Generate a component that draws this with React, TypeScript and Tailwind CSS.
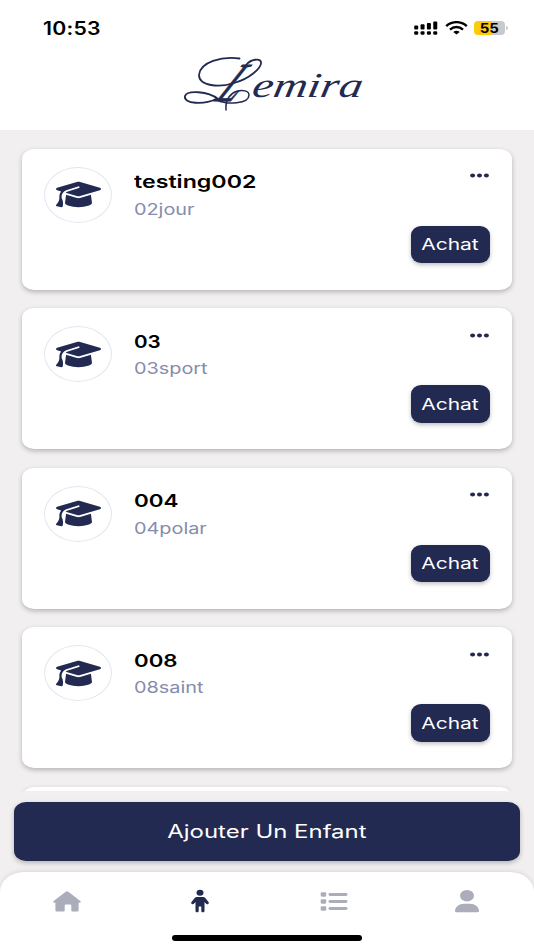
import React from 'react';
import clsx from 'clsx';
import { FaGraduationCap } from 'react-icons/fa6';

const children = [
  { name: 'testing002', detail: '02jour', nameScale: 'scale-x-[1.325]' },
  { name: '03', detail: '03sport', nameScale: 'scale-x-[1.18]' },
  { name: '004', detail: '04polar', nameScale: 'scale-x-[1.28]' },
  { name: '008', detail: '08saint', nameScale: 'scale-x-[1.27]' },
];

const StatusBar = () => (
  <div className="flex h-14 items-center justify-between pl-[43px] pr-[25px] text-black">
    <span className="mt-[2px] inline-block origin-left scale-x-[1.18] text-[18px] font-semibold leading-none tracking-[0.2px]">10:53</span>
    <div className="flex items-center">
      <svg className="h-[14px] w-6" viewBox="0 0 24 14">
        {[0, 1, 2, 3].map((i) => (
          <g key={i}>
            <rect x={0.2 + i * 6.35} y={4.5 - i * 1.3} width="4" height={4 + i * 1.3} rx="1" />
            <rect x={0.2 + i * 6.35} y="10.2" width="4" height="3.6" rx="1.2" />
          </g>
        ))}
      </svg>
      <svg className="ml-[7px] h-[14px] w-[23px]" viewBox="0 0 23 14" fill="none" stroke="currentColor" strokeWidth="2.4">
        <path d="M1.2 5.2C7-.2 16-.2 21.8 5.2" />
        <path d="M5 8.600c3.800-3.400 9.200-3.400 13 0" />
        <path d="M8.300 10.900c1.800-1.500 4.600-1.500 6.400 0l-3.200 2.700z" fill="currentColor" stroke="none" />
      </svg>
      <div className="ml-[6px] flex h-[14px] w-[31px] items-center justify-center rounded-[4px] bg-[linear-gradient(to_right,#fecb0a_55%,#c9c9cb_55%)]">
        <span className="scale-x-[1.15] text-[13px] font-bold leading-none">55</span>
      </div>
      <div className="ml-px mr-px h-1 w-[2px] rounded-r-full bg-[#c9c9cb]" />
    </div>
  </div>
);

const Logo = () => (
  <svg className="mx-auto h-[64px] w-[200px]" viewBox="167 50 200 64" fill="none" stroke="#222a52" strokeLinecap="round">
    {/* Swashes round the initial */}
    <path d="M239.500 58.500C222 56 200 62 199 75c0 11 20 13 35 8 15-4 28-15 27-21-1-4-10-3-15 3" strokeWidth="1.800" />
    <path d="M218 99c-10-8-31-9-33-3-2 8 19 9 31 3" strokeWidth="1.800" />
    <path d="M217 100c10 5 32 4 32-5 0-8-25-7-23 15" strokeWidth="1.500" />
    <g fill="#222a52" stroke="none" fontFamily="'Liberation Serif', serif" fontStyle="italic">
      <text transform="translate(214 100.500) skewX(-34)" x="0" y="0" fontSize="55" textLength="20" lengthAdjust="spacingAndGlyphs" stroke="#222a52" strokeWidth="0.900">L</text>
      <text transform="translate(251 97) skewX(-10)" x="0" y="0" fontSize="35" textLength="110" lengthAdjust="spacingAndGlyphs">emira</text>
    </g>
  </svg>
);

type ChildCardProps = { name: string; detail: string; nameScale: string };

const ChildCard = ({ name, detail, nameScale }: ChildCardProps) => (
  <div className="flex h-[141px] shrink-0 rounded-[12px/10px] bg-white pl-[22px] pr-[22px] pt-[18px] shadow-[0_2px_5px_rgba(0,0,0,0.25)]">
    <div className="flex h-[56px] w-[68px] shrink-0 items-center justify-center rounded-[50%] border border-[#e1e6f0]">
      <FaGraduationCap className="h-[29px] w-[45px] text-[#222a52]" preserveAspectRatio="none" />
    </div>
    <div className="ml-[22px] flex-1 pt-[3.5px]">
      <h2 className={clsx('inline-block origin-left whitespace-nowrap text-[17.5px] font-semibold leading-6 text-black', nameScale)}>{name}</h2>
      <p className="mt-[2.500px] w-max origin-left scale-x-[1.24] text-[16px] leading-6 text-[#858cac]">{detail}</p>
    </div>
    <div className="flex w-20 flex-col items-end">
      <svg className="mr-[1.5px] mt-[6.5px] h-[5px] w-[19px]" viewBox="0 0 19 5" fill="#222a52">
        <ellipse cx="2.6" cy="2.5" rx="2.5" ry="2.1" />
        <ellipse cx="9.5" cy="2.5" rx="2.5" ry="2.1" />
        <ellipse cx="16.4" cy="2.5" rx="2.5" ry="2.1" />
      </svg>
      <button className="mt-[47.5px] flex h-[37.5px] w-[79.5px] items-center justify-center rounded-[10px/9px] bg-[#222a52] text-white shadow-[0_2px_4px_rgba(0,0,0,0.25)]">
        <span className="scale-x-[1.31] text-[16px]">Achat</span>
      </button>
    </div>
  </div>
);

const TabBar = () => (
  <nav className="relative grid h-[78px] grid-cols-4 justify-items-center rounded-t-[24px_20px] bg-white pt-[17px] text-[#abadba] shadow-[0_-1px_4px_rgba(0,0,0,0.1)]">
    <svg className="h-6 w-7" viewBox="0 0 28 24" fill="currentColor">
      <path d="M14 2.2c.5 0 .9.2 1.3.5l12 9.2c1 .8.5 1.8-.7 1.8h-1v7.200c0 1.100-.7 1.700-1.800 1.700h-4.200c-.8 0-1.300-.5-1.300-1.200v-4.700c0-.7-.5-1.100-1.200-1.100h-4.200c-.7 0-1.200.4-1.200 1.100v4.700c0 .7-.5 1.200-1.300 1.200H4.200c-1.100 0-1.800-.6-1.800-1.700v-7.200h-1c-1.200 0-1.700-1-.7-1.800l12-9.200c.4-.3.8-.5 1.300-.5z" />
    </svg>
    <svg className="h-6 w-[18px] text-[#222a52]" viewBox="0 0 18 24" fill="currentColor">
      <ellipse cx="9" cy="3.7" rx="3.5" ry="3" />
      <path d="M6.300 8h5.400c1.200 0 2.100.5 2.800 1.300l3 3.700c.6.800.4 1.600-.4 2-.8.400-1.700.2-2.200-.4l-1.400-1.700V22c0 .8-.7 1.300-1.600 1.300S10.300 22.800 10.300 22v-4.500H7.700V22c0 .8-.7 1.300-1.600 1.300S4.500 22.800 4.500 22v-9.100l-1.400 1.700c-.5.6-1.400.8-2.200.4-.8-.4-1-1.200-.4-2l3-3.700C4.200 8.500 5.100 8 6.300 8z" />
    </svg>
    <svg className="h-6 w-7" viewBox="0 0 28 24" fill="currentColor">
      {[3.2, 10.2, 17.2].map((y) => (
        <g key={y}>
          <rect x="0.7" y={y} width="5.5" height="4.5" rx="1.1" />
          <rect x="8.5" y={y + 0.8} width="19" height="2.9" rx="1.4" />
        </g>
      ))}
    </svg>
    <svg className="h-6 w-6" viewBox="0 0 24 24" fill="currentColor">
      <ellipse cx="12" cy="6.7" rx="7" ry="5.8" />
      <path d="M9 14.700h6c5 0 9 3.300 9 7.400 0 .8-.6 1.200-1.300 1.200H1.300C.6 23.300 0 22.900 0 22.100 0 18 4 14.700 9 14.700z" />
    </svg>
    <div className="absolute bottom-[9px] left-1/2 h-[6px] w-[190px] -translate-x-1/2 rounded-full bg-black" />
  </nav>
);

const App = () => {
  return (
    <div className="flex h-[950px] w-[534px] flex-col overflow-hidden bg-[#f1eff0] font-['Inter','Liberation_Sans',sans-serif]">
      <header className="h-[130px] shrink-0 bg-white">
        <StatusBar />
        <div className="-mt-[6px]">
          <Logo />
        </div>
      </header>

      <main className="flex h-[661px] shrink-0 flex-col gap-[18.6px] overflow-hidden px-[22px] pt-[18.5px]">
        {children.map((child) => (
          <ChildCard key={child.name} {...child} />
        ))}
        {/* Next card, scrolled out of view */}
        <div className="h-[141px] shrink-0 rounded-[12px/10px] bg-white shadow-[0_2px_5px_rgba(0,0,0,0.25)]" />
      </main>

      <div className="px-[14px] pb-[11px] pt-[11px]">
        <button className="flex h-[59px] w-full items-center justify-center rounded-[12px/10px] bg-[#222a52] text-white shadow-[0_2px_5px_rgba(0,0,0,0.25)]">
          <span className="scale-x-[1.33] text-[18px]">Ajouter Un Enfant</span>
        </button>
      </div>

      <TabBar />
    </div>
  );
};

export default App;
